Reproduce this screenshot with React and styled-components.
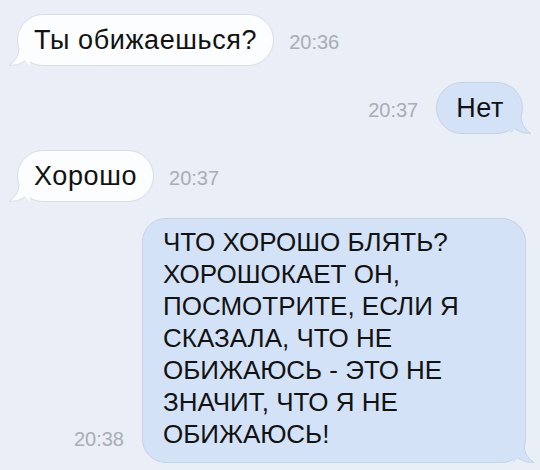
import React from 'react';
import styled, { createGlobalStyle } from 'styled-components';

const GlobalStyle = createGlobalStyle`
    body {
        margin: 0;
        background: #e9eef7;
        font-family: "Liberation Sans", Arial, sans-serif;
    }
`

const Chat = styled.div`
    width: 540px;
    height: 470px;
    box-sizing: border-box;
    padding: 14px 14px 0 17px;
    display: flex;
    flex-direction: column;
    gap: 16px;
    overflow: hidden;
`

const Row = styled.div`
    display: flex;
    align-items: flex-end;
    justify-content: ${p => (p.$out ? 'flex-end' : 'flex-start')};
    gap: ${p => (p.$out ? '18px' : '15px')};
    padding-right: ${p => p.$pr || 0}px;
`

const Bubble = styled.div`
    position: relative;
    box-sizing: border-box;
    width: ${p => (p.$width ? p.$width + 'px' : 'auto')};
    padding: ${p => (p.$out ? '9px 18px 9px 19px' : '9px 16px 9px 16px')};
    border-radius: 26px;
    background: ${p => (p.$out ? '#d4e2f7' : '#fcfdfe')};
    border: 1px solid ${p => (p.$out ? '#c6d3e6' : '#d9dee6')};
    color: #121212;
    font-size: 27px;
    letter-spacing: 0.6px;
    line-height: 32px;
`

const LongBubble = styled(Bubble)`
    padding: 7px 18px 12px 20px;
    border-radius: 24px;
    font-size: 26px;
    letter-spacing: 0;
`

const Tail = styled.svg`
    position: absolute;
    bottom: -1px;
    ${p => (p.$out ? 'right: -12px;' : 'left: -12px;')}
    width: 24px;
    height: 18px;
    overflow: visible;
`

const Time = styled.span`
    font-size: 20px;
    line-height: 22px;
    color: #a9adb5;
    margin-bottom: 13px;
    white-space: nowrap;
`

const BubbleTail = ({ out }) => {
    const fill = out ? '#d4e2f7' : '#fcfdfe'
    const stroke = out ? '#c6d3e6' : '#d9dee6'
    return (
        <Tail $out={out} viewBox="0 0 24 18">
            <g transform={out ? 'translate(24 0) scale(-1 1)' : undefined}>
                <path d="M13 0 Q13 11 3 17.5 Q12 18 19 13 L24 17.5 L24 0 Z" fill={fill} />
                <path d="M13 0 Q13 11 3 17.5 Q12 18 19 13" fill="none" stroke={stroke} strokeWidth="1" />
            </g>
        </Tail>
    )
}

const longLines = [
    'ЧТО ХОРОШО БЛЯТЬ?',
    'ХОРОШОКАЕТ ОН,',
    'ПОСМОТРИТЕ, ЕСЛИ Я',
    'СКАЗАЛА, ЧТО НЕ',
    'ОБИЖАЮСЬ - ЭТО НЕ',
    'ЗНАЧИТ, ЧТО Я НЕ',
    'ОБИЖАЮСЬ!',
]

const App = () => {
    return (
        <>
            <GlobalStyle />
            <Chat>
                <Row>
                    <Bubble>
                        Ты обижаешься?
                        <BubbleTail />
                    </Bubble>
                    <Time>20:36</Time>
                </Row>
                <Row $out $pr={3}>
                    <Time>20:37</Time>
                    <Bubble $out>
                        Нет
                        <BubbleTail out />
                    </Bubble>
                </Row>
                <Row>
                    <Bubble>
                        Хорошо
                        <BubbleTail />
                    </Bubble>
                    <Time>20:37</Time>
                </Row>
                <Row $out>
                    <Time>20:38</Time>
                    <LongBubble $out $width={384}>
                        {longLines.map((line, i) => (
                            <div key={i}>{line}</div>
                        ))}
                        <BubbleTail out />
                    </LongBubble>
                </Row>
            </Chat>
        </>
    );
};

export default App;
